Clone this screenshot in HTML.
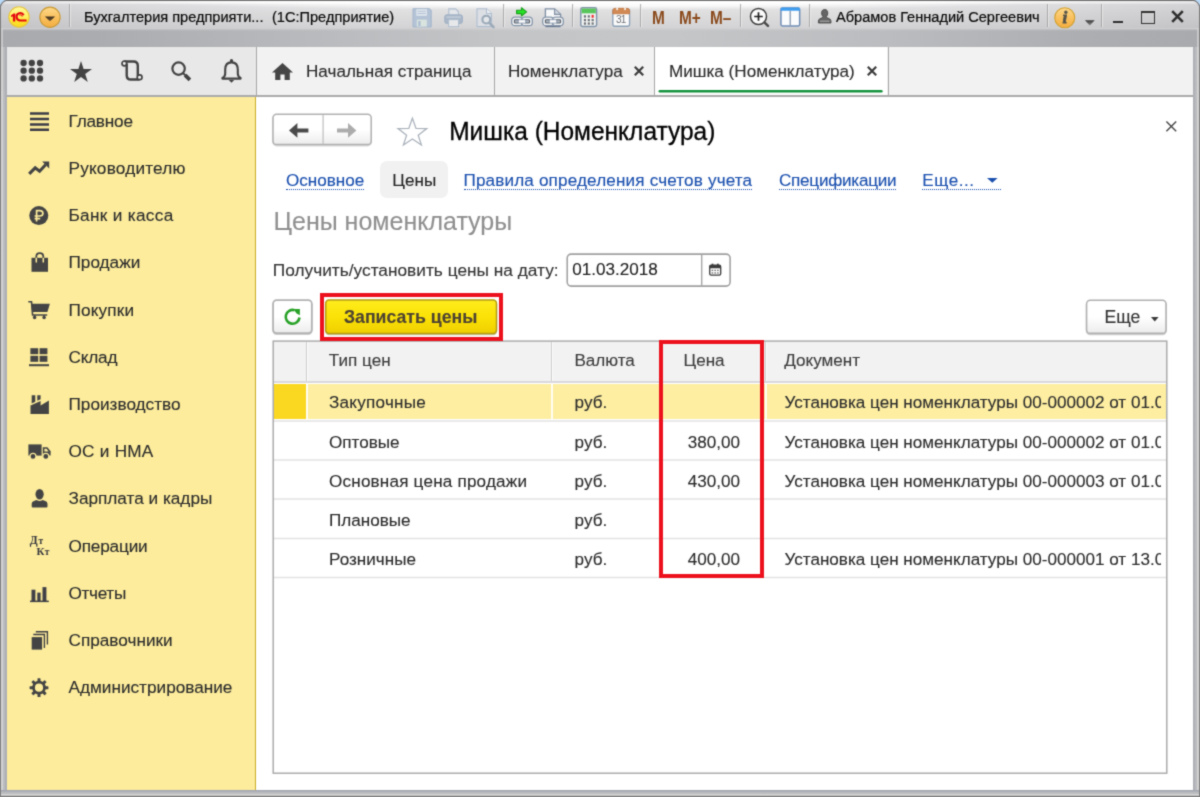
<!DOCTYPE html>
<html lang="ru">
<head>
<meta charset="utf-8">
<title>1C</title>
<style>
*{box-sizing:border-box;margin:0;padding:0}
html,body{width:1200px;height:797px;overflow:hidden;background:#b4b5b9;font-family:"Liberation Sans",sans-serif;}
body{position:relative;}
#wrap{position:absolute;left:0;top:0;width:1200px;height:797px;overflow:hidden;filter:url(#pgblur)}
.abs{position:absolute}
.t{position:absolute;white-space:nowrap;line-height:20px;font-size:17.1px;color:#2b2b2b;-webkit-text-stroke-width:.12px}
svg{position:absolute;overflow:visible}
/* ---------- window frame ---------- */
#frame{left:0;top:0;width:1200px;height:797px;background:#b6b7bb;}
#titlebar{left:1px;top:1px;width:1198px;height:46px;background:linear-gradient(to bottom,#fcfcfc 0px,#fafafa 2px,#e5e5e7 3.4px,#dededf 12px,#d3d3d5 27px,#cfcfd1 28px);}
#tshade{left:1px;top:1px;width:1198px;height:28px;background:linear-gradient(to right,rgba(90,90,100,.13) 0,rgba(90,90,100,.06) 12%,rgba(90,90,100,0) 30%,rgba(90,90,100,0) 70%,rgba(90,90,100,.06) 88%,rgba(90,90,100,.13) 100%)}
#tglow{left:120px;top:1px;width:960px;height:8.5px;background:radial-gradient(ellipse 50% 100% at 50% 0,rgba(255,255,255,.95) 0,rgba(255,255,255,.8) 55%,rgba(255,255,255,0) 100%)}
#band{left:1px;top:28.6px;width:1198px;height:18.4px;background:linear-gradient(to right,#a9aaae 0,#abacb0 8%,#b9babd 26%,#c4c5c7 42%,#c5c6c8 56%,#bbbcbf 74%,#adaeb2 90%,#a9aaae 100%)}
#bandtop{left:1px;top:27.6px;width:1198px;height:3px;background:linear-gradient(to bottom,rgba(207,207,209,1) 0,rgba(207,207,209,.55) 45%,rgba(207,207,209,0) 100%)}
.tsep{position:absolute;top:4px;width:2px;height:22.5px;background:linear-gradient(to right,#939393 0,#939393 1px,#f2f2f2 1px);opacity:.68}
.tt{position:absolute;white-space:nowrap;font-size:15.5px;line-height:18px;color:#0a0a0a;-webkit-text-stroke-width:.22px;transform-origin:0 0;transform:scaleX(.94)}
/* ---------- toolbar / tabs ---------- */
#toolbar{left:7px;top:47px;width:249px;height:48px;background:#e8e8e8}
#tabs{left:257px;top:47px;width:936px;height:48px;background:#f2f2f2}
#tabline{left:7px;top:95px;width:1186px;height:1.5px;background:#aaaaaa}
.vsep{position:absolute;top:47px;width:1.4px;height:48px;background:#a6a6a6}
/* ---------- sidebar ---------- */
#sidebar{left:7px;top:96.5px;width:248px;height:693.5px;background:#fcec9c}
#sideedge{left:254.8px;top:96.5px;width:1.5px;height:693.5px;background:linear-gradient(to right,#d9bd3a,#bf9d12)}
#main{left:256.3px;top:96.5px;width:936.7px;height:693.5px;background:#fff}
.st{left:68.5px;font-size:17.2px;color:#2b2b2b}
.lnk{color:#1a4fae;border-bottom:1.4px dotted #1a4fae;height:19.4px}
.th{color:#3b3b3b}
.num{left:663px;width:77px;text-align:right}
.doc{width:376.6px;overflow:hidden}
</style>
</head>
<body>
<svg width="0" height="0" style="position:absolute"><filter id="pgblur" x="0" y="0" width="100%" height="100%" color-interpolation-filters="sRGB"><feConvolveMatrix order="3" kernelMatrix="0.03 0.1 0.03 0.1 0.48 0.1 0.03 0.1 0.03" divisor="1" edgeMode="duplicate" preserveAlpha="true"/></filter></svg>
<div id="wrap">
<div id="frame" class="abs"></div>
<div id="titlebar" class="abs"></div>
<div id="tshade" class="abs"></div>
<div id="tglow" class="abs"></div>
<div id="band" class="abs"></div>
<div id="bandtop" class="abs"></div>
<div id="toolbar" class="abs"></div>
<div id="tabs" class="abs"></div>
<div id="sidebar" class="abs"></div>
<div id="sideedge" class="abs"></div>
<div id="main" class="abs"></div>
<div id="tabline" class="abs"></div>
<!--TITLEBAR-->
<!-- 1C logo -->
<svg style="left:8px;top:6px" width="22" height="22" viewBox="0 0 22 22">
 <defs>
  <linearGradient id="g1c" x1="0" y1="0" x2="0" y2="1"><stop offset="0" stop-color="#fff9a0"/><stop offset=".45" stop-color="#fff163"/><stop offset=".7" stop-color="#fee530"/><stop offset="1" stop-color="#f8d61e"/></linearGradient>
  <linearGradient id="gor" x1="0" y1="0" x2="0" y2="1"><stop offset="0" stop-color="#fdd98a"/><stop offset=".5" stop-color="#f9c160"/><stop offset="1" stop-color="#f4ae40"/></linearGradient>
  <linearGradient id="gtri" x1="0" y1="0" x2="0" y2="1"><stop offset="0" stop-color="#3a2c1c"/><stop offset="1" stop-color="#6b5330"/></linearGradient>
 </defs>
 <circle cx="11" cy="11" r="10.2" fill="url(#g1c)" stroke="#e6c33c" stroke-width="1.1"/>
 <path d="M2.9 9.6 L5.6 7.4 L7.3 7.4 L7.3 15.6 L4.9 15.6 L4.9 10.3 L3.4 11.2 Z" fill="#e4080f"/>
 <path d="M15.6 9.3 A3.7 3.7 0 1 0 12.1 14.5 L18.6 14.5" fill="none" stroke="#e4080f" stroke-width="2.1"/>
 <path d="M14.2 10.6 A1.9 1.9 0 0 0 11.4 9.2" fill="none" stroke="#e4080f" stroke-width="1"/>
</svg>
<!-- orange dropdown -->
<svg style="left:39px;top:6px" width="22" height="22" viewBox="0 0 22 22">
 <circle cx="11" cy="11.2" r="10.1" fill="url(#gor)" stroke="#c99a36" stroke-width="1.2"/>
 <path d="M5.9 10.4 L16.1 10.4 L11 15.2 Z" fill="url(#gtri)"/>
</svg>
<div class="tsep" style="left:68.5px"></div>
<div class="tt" style="left:84px;top:7.5px">Бухгалтерия предприяти...</div>
<div class="tt" style="left:271.5px;top:7.5px">(1С:Предприятие)</div>
<!-- save (disabled) -->
<svg style="left:412px;top:8px" width="20" height="20" viewBox="0 0 20 20">
 <path d="M1 .7 H17.6 L19.2 2.3 V19 H1 Z" fill="#b4c3d6" stroke="#a3b5cb" stroke-width="1"/>
 <rect x="4.3" y="1.2" width="10.6" height="6.6" fill="#dfe6ee"/>
 <path d="M5.5 3.3 H13.8 M5.5 5.5 H13.8" stroke="#b4c3d6" stroke-width="1"/>
 <rect x="4.8" y="11.6" width="10" height="7" fill="#d9e4df"/>
 <rect x="6.3" y="13" width="2.2" height="5" fill="#a9bbd0"/>
</svg>
<!-- printer (disabled) -->
<svg style="left:443.5px;top:7.8px" width="19.2" height="19.4" viewBox="0 0 20 20">
 <path d="M5 7 V.8 H12 L15 3.6 V7" fill="#e3e6ea" stroke="#aebccd" stroke-width="1.1"/>
 <rect x=".8" y="7" width="18.4" height="9" rx="2" fill="#a9b7c8" stroke="#9fb0c4" stroke-width="1"/>
 <path d="M2.5 9.3 H17.5" stroke="#cdd6e0" stroke-width="1.2"/>
 <rect x="4.8" y="12" width="10.4" height="7.4" fill="#e6e8ea" stroke="#aebccd" stroke-width="1"/>
</svg>
<!-- preview (disabled) -->
<svg style="left:475.5px;top:8px" width="20" height="20" viewBox="0 0 20 20">
 <path d="M1 .7 H10.5 L15.5 5.5 V18.6 H1 Z" fill="#dcdfe4" stroke="#aebdd0" stroke-width="1.1"/>
 <path d="M10.5 .7 V5.5 H15.5" fill="#eef0f3" stroke="#aebdd0" stroke-width="1"/>
 <circle cx="10.3" cy="11.6" r="3.9" fill="#e4e7ea" stroke="#9aa9b8" stroke-width="2.1"/>
 <path d="M13.3 14.8 L17.6 19.2" stroke="#9aa9b8" stroke-width="2.4" stroke-linecap="round"/>
</svg>
<div class="tsep" style="left:503px"></div>
<!-- link with green arrow -->
<svg style="left:511px;top:6.5px" width="23" height="20" viewBox="0 0 23 20">
 <path d="M5.6 3.2 H10.4 V.8 L15.6 4.9 L10.4 9 V6.6 H5.6 Z" fill="#25e426" stroke="#1a9e1a" stroke-width="1.1" stroke-linejoin="round"/>
 <g transform="translate(0 9.4)"><g stroke="#8494a8" stroke-width="1.3" fill="#f5f7f9"><rect x=".7" y=".7" width="10.8" height="8.6" rx="3.2"/><rect x="10.5" y=".7" width="10.8" height="8.6" rx="3.2"/></g>
 <rect x="3.4" y="3.4" width="4.6" height="3.2" rx=".8" fill="#aeb6c0" stroke="#59616b" stroke-width="1.1"/><rect x="14" y="3.4" width="4.6" height="3.2" rx=".8" fill="#aeb6c0" stroke="#59616b" stroke-width="1.1"/>
 <rect x="7.2" y="3.3" width="7.6" height="3.4" rx="1.2" fill="#fdfdfe" stroke="#8494a8" stroke-width=".9"/></g>
</svg>
<!-- document link -->
<svg style="left:542.2px;top:7.5px" width="23" height="20" viewBox="0 0 23 20">
 <path d="M3.4 9.6 V.9 H12.6 L18.6 6.4 V9.6" fill="#f7f8f9" stroke="#7f8ea3" stroke-width="1.3"/>
 <path d="M12.6 .9 V6.4 H18.6" fill="#cfd6df" stroke="#7f8ea3" stroke-width="1.1"/>
 <path d="M3.4 18.4 H18.6" stroke="#66768e" stroke-width="1.6"/>
 <g transform="translate(0 8.4)"><g stroke="#8494a8" stroke-width="1.3" fill="#f5f7f9"><rect x=".7" y=".7" width="10.8" height="8.6" rx="3.2"/><rect x="10.5" y=".7" width="10.8" height="8.6" rx="3.2"/></g>
 <rect x="3.4" y="3.4" width="4.6" height="3.2" rx=".8" fill="#aeb6c0" stroke="#59616b" stroke-width="1.1"/><rect x="14" y="3.4" width="4.6" height="3.2" rx=".8" fill="#aeb6c0" stroke="#59616b" stroke-width="1.1"/>
 <rect x="7.2" y="3.3" width="7.6" height="3.4" rx="1.2" fill="#fdfdfe" stroke="#8494a8" stroke-width=".9"/></g>
</svg>
<div class="tsep" style="left:571.5px"></div>
<!-- calculator -->
<svg style="left:579.8px;top:6.8px" width="17.4" height="20.2" viewBox="0 0 18 21">
 <rect x=".8" y=".8" width="16.4" height="19.4" rx="1.8" fill="#f3f4f2" stroke="#7f93a8" stroke-width="1.5"/>
 <rect x="1.6" y="1.6" width="14.8" height="5" fill="#58c65a"/>
 <g fill="#6b6f75"><rect x="4" y="8.6" width="2.2" height="2.4"/><rect x="8" y="8.6" width="2.2" height="2.4"/><rect x="4" y="12.4" width="2.2" height="2.4"/><rect x="8" y="12.4" width="2.2" height="2.4"/><rect x="12" y="12.4" width="2.2" height="2.4"/><rect x="4" y="16" width="2.2" height="2.4"/><rect x="8" y="16" width="2.2" height="2.4"/><rect x="12" y="16" width="2.2" height="2.4"/></g>
 <rect x="12" y="8.2" width="2.2" height="3" fill="#f0262c"/>
</svg>
<!-- calendar 31 -->
<svg style="left:611.8px;top:6.6px" width="18.4" height="20.2" viewBox="0 0 19 21">
 <rect x=".8" y="2" width="17.4" height="18" rx="2" fill="#fbfbfb" stroke="#8ca0b6" stroke-width="1.4"/>
 <path d="M.8 7 V4 Q.8 1.4 3.4 1.4 H15.6 Q18.2 1.4 18.2 4 V7 Z" fill="#d28a55" stroke="#c67c48" stroke-width="1"/>
 <rect x="4.4" y=".2" width="1.8" height="3" fill="#f5f0ea"/><rect x="12.6" y=".2" width="1.8" height="3" fill="#f5f0ea"/>
 <text x="9.5" y="17" font-family="Liberation Sans" font-size="10.5" fill="#6d7076" text-anchor="middle" textLength="11">31</text>
</svg>
<div class="tsep" style="left:640px"></div>
<div class="abs" style="left:651.5px;top:6.5px;font-size:17.5px;line-height:22px;font-weight:700;color:#8a4a1c;white-space:nowrap;transform-origin:0 0;transform:scaleX(.88)">M</div>
<div class="abs" style="left:678.5px;top:6.5px;font-size:17.5px;line-height:22px;font-weight:700;color:#8a4a1c;white-space:nowrap;transform-origin:0 0;transform:scaleX(.88)">M+</div>
<div class="abs" style="left:709.5px;top:6.5px;font-size:17.5px;line-height:22px;font-weight:700;color:#8a4a1c;white-space:nowrap;transform-origin:0 0;transform:scaleX(.88)">M–</div>
<div class="tsep" style="left:740px"></div>
<!-- zoom -->
<svg style="left:748.5px;top:7px" width="22" height="22" viewBox="0 0 22 22">
 <circle cx="9.5" cy="9.5" r="8" fill="#fcfcfc" stroke="#3c3c3c" stroke-width="1.5"/>
 <path d="M5.2 9.5 H13.8 M9.5 5.2 V13.8" stroke="#1e1e1e" stroke-width="1.7"/>
 <path d="M15.4 15.4 L19 18.8" stroke="#4a4a4a" stroke-width="2.5" stroke-linecap="round"/>
</svg>
<!-- panels -->
<svg style="left:780.4px;top:6.6px" width="20.6" height="20" viewBox="0 0 22 21">
 <rect x="1" y="1" width="20" height="19" rx="1.5" fill="#fafbfd" stroke="#6f8db4" stroke-width="1.6"/>
 <path d="M.6 3.8 V2 Q.6 .4 2.2 .4 H19.8 Q21.4 .4 21.4 2 V3.8 Z" fill="#3f9df0"/>
 <path d="M10.9 3.8 V19.4" stroke="#7d8ea6" stroke-width="1.3"/>
</svg>
<div class="tsep" style="left:808.5px"></div>
<!-- user -->
<svg style="left:817.8px;top:8.6px" width="13.4" height="14.6" viewBox="0 0 14 15">
 <path d="M7 .4 C9.3 .4 10.2 2 10.2 4 C10.2 5.8 9.6 7 8.8 7.7 C8.8 9 10.5 9.4 11.9 10 C13.3 10.6 13.6 11.6 13.6 14.5 H.4 C.4 11.6 .7 10.6 2.1 10 C3.5 9.4 5.2 9 5.2 7.7 C4.4 7 3.8 5.8 3.8 4 C3.8 2 4.7 .4 7 .4 Z" fill="#666" stroke="#444" stroke-width=".9"/>
 <path d="M2 12.6 H12" stroke="#b0b0b0" stroke-width="1.1"/>
</svg>
<div class="tt" style="left:836px;top:7.5px">Абрамов Геннадий Сергеевич</div>
<div class="tsep" style="left:1046.5px"></div>
<!-- info -->
<svg style="left:1054.3px;top:6.7px" width="21.5" height="21.5" viewBox="0 0 22 22">
 <circle cx="11" cy="11" r="10.2" fill="url(#gor)" stroke="#d3a030" stroke-width="1.2"/>
 <text x="11.2" y="16.8" font-family="Liberation Serif" font-style="italic" font-weight="700" font-size="17.5" fill="#55544a" stroke="#55544a" stroke-width=".8" text-anchor="middle">i</text>
</svg>
<svg style="left:1083.6px;top:19.6px" width="11.6" height="6" viewBox="0 0 12 7"><path d="M.3 .4 H11.7 L6 6.4 Z" fill="url(#gdd)"/><defs><linearGradient id="gdd" x1="0" y1="0" x2="0" y2="1"><stop offset="0" stop-color="#383838"/><stop offset="1" stop-color="#8a8a8a"/></linearGradient></defs></svg>
<div class="tsep" style="left:1100.5px"></div>
<!-- window buttons -->
<div class="abs" style="left:1113.2px;top:20.6px;width:10.2px;height:2.3px;background:#2e2e2e"></div>
<div class="abs" style="left:1140.5px;top:11px;width:14.5px;height:13px;border:1.4px solid #333;border-top-width:2.4px"></div>
<svg style="left:1171.2px;top:10.2px" width="13" height="13" viewBox="0 0 13 13"><path d="M1.2 1.2 L11.8 11.8 M11.8 1.2 L1.2 11.8" stroke="#2e2e2e" stroke-width="2.6"/></svg>
<!--/TITLEBAR-->
<!--TOOLBAR-->
<div class="vsep" style="left:255.8px"></div>
<div class="vsep" style="left:493.5px"></div>
<div class="vsep" style="left:654px"></div>
<div class="vsep" style="left:887.5px"></div>
<div class="abs" style="left:655.4px;top:47px;width:232.1px;height:48px;background:#fff"></div>
<svg style="left:0;top:0" width="1200" height="100" viewBox="0 0 1200 100"><path d="M659.8 91.2 H881.4" stroke="#12913a" stroke-width="2.5" stroke-linecap="round"/></svg>
<!-- grid -->
<svg style="left:20px;top:59px" width="24" height="24" viewBox="0 0 24 24"><g fill="#424242">
<circle cx="3.6" cy="4" r="3.15"/><circle cx="11.8" cy="4" r="3.15"/><circle cx="20" cy="4" r="3.15"/>
<circle cx="3.6" cy="11.7" r="3.15"/><circle cx="11.8" cy="11.7" r="3.15"/><circle cx="20" cy="11.7" r="3.15"/>
<circle cx="3.6" cy="19.4" r="3.15"/><circle cx="11.8" cy="19.4" r="3.15"/><circle cx="20" cy="19.4" r="3.15"/></g></svg>
<!-- star -->
<svg style="left:70px;top:61px" width="22" height="21" viewBox="0 0 22 21"><path d="M11 0 L13.6 8 L22 8 L15.2 12.9 L17.8 21 L11 16 L4.2 21 L6.8 12.9 L0 8 L8.4 8 Z" fill="#424242"/></svg>
<!-- scroll / history -->
<svg style="left:121px;top:60.3px" width="22" height="21" viewBox="0 0 22 21">
 <path d="M3.4 4.8 H5.7 V15.2 Q5.7 19.5 10 19.5 H18.4" fill="none" stroke="#424242" stroke-width="2.4"/>
 <path d="M3.4 1.5 H12.5 Q16.8 1.5 16.8 5.8 V15.4" fill="none" stroke="#424242" stroke-width="2.4"/>
 <circle cx="3.3" cy="3.5" r="2.3" fill="#f6f6f6" stroke="#424242" stroke-width="1.7"/>
 <circle cx="18.6" cy="17.2" r="2.4" fill="#f6f6f6" stroke="#424242" stroke-width="1.7"/>
</svg>
<!-- search -->
<svg style="left:170.5px;top:60.5px" width="21" height="21" viewBox="0 0 21 21">
 <circle cx="7.6" cy="7.6" r="6.2" fill="none" stroke="#424242" stroke-width="2.2"/>
 <path d="M12.2 12.2 L14.4 14.4" stroke="#424242" stroke-width="2"/>
 <path d="M15.4 12.8 L20.2 17.6 L17.6 20.2 L12.8 15.4 Z" fill="#424242"/>
</svg>
<!-- bell -->
<svg style="left:220.5px;top:58.5px" width="21" height="24" viewBox="0 0 21 24">
 <path d="M10.5 3.4 C5.6 3.4 4.2 7 4.2 10.6 V14.6 Q4.2 17.6 1.4 18.9 V19.6 H19.6 V18.9 Q16.8 17.6 16.8 14.6 V10.6 C16.8 7 15.4 3.4 10.5 3.4 Z" fill="none" stroke="#424242" stroke-width="2.1" stroke-linejoin="round"/>
 <ellipse cx="10.5" cy="2" rx="1.7" ry="1.9" fill="#424242"/>
 <path d="M7.8 21 H13.2 L10.5 23.7 Z" fill="#424242"/>
</svg>
<!-- home -->
<svg style="left:271.5px;top:63px" width="21" height="17" viewBox="0 0 21 17"><path d="M10.5 0 L21 9.6 H17.8 V17 H12.6 V11.4 H8.4 V17 H3.2 V9.6 H0 Z" fill="#454545"/></svg>
<div class="t" style="left:306px;top:61.5px">Начальная страница</div>
<div class="t" style="left:508px;top:61.5px">Номенклатура</div>
<svg style="left:633.6px;top:66px" width="10" height="10" viewBox="0 0 10 10"><path d="M.8 .8 L9.2 9.2 M9.2 .8 L.8 9.2" stroke="#3a3a3a" stroke-width="2.2"/></svg>
<div class="t" style="left:669px;top:61.5px">Мишка (Номенклатура)</div>
<svg style="left:867px;top:66px" width="10" height="10" viewBox="0 0 10 10"><path d="M.8 .8 L9.2 9.2 M9.2 .8 L.8 9.2" stroke="#3a3a3a" stroke-width="2.2"/></svg>
<!--/TOOLBAR-->
<!--SIDEBAR-->
<!-- 1 Главное: hamburger -->
<svg style="left:29.5px;top:112px" width="19" height="19" viewBox="0 0 19 19"><path d="M0 1.4 H19 M0 6.9 H19 M0 12.4 H19 M0 17.8 H19" stroke="#3a3a46" stroke-width="2.5"/></svg>
<div class="t st" style="top:110.8px;letter-spacing:-0.19px">Главное</div>
<!-- 2 Руководителю: trend -->
<svg style="left:28.2px;top:161.2px" width="22" height="15" viewBox="0 0 22 15"><path d="M1.2 12.8 L7.2 6.8 L11.6 10.2 L17.6 3.8" fill="none" stroke="#444" stroke-width="3.1" stroke-linejoin="miter"/><path d="M14.2 .6 H21.2 V7.6 Z" fill="#444"/></svg>
<div class="t st" style="top:158.0px;letter-spacing:0.20px">Руководителю</div>
<!-- 3 Банк и касса: ruble coin -->
<svg style="left:29.2px;top:206px" width="20" height="20" viewBox="0 0 20 20"><circle cx="9.8" cy="9.6" r="9.5" fill="#444"/><path d="M7.6 15.4 V4.6 H10.8 Q13.9 4.6 13.9 7.3 Q13.9 10 10.8 10 H5.6 M5.6 12.6 H11.2" fill="none" stroke="#fcec9c" stroke-width="1.7"/></svg>
<div class="t st" style="top:205.2px;letter-spacing:0.32px">Банк и касса</div>
<!-- 4 Продажи: bag -->
<svg style="left:30.5px;top:252px" width="18" height="20" viewBox="0 0 18 20"><path d="M.5 5.8 H17 V19.8 H.5 Z" fill="#444"/><path d="M5.3 6 V4.6 Q5.3 1.2 8.8 1.2 Q12.3 1.2 12.3 4.6 V6" fill="none" stroke="#444" stroke-width="1.8"/><path d="M5.3 5.8 V10.6 M12.3 5.8 V10.6" stroke="#fcec9c" stroke-width="1.5"/></svg>
<div class="t st" style="top:252.4px">Продажи</div>
<!-- 5 Покупки: cart -->
<svg style="left:28px;top:300px" width="23" height="20" viewBox="0 0 23 20"><path d="M.3 1.7 H3.5 L4.6 15 H19.2" fill="none" stroke="#444" stroke-width="1.6"/><path d="M3.4 3.7 H21.9 L19.4 12.1 H4.1 Z" fill="#444"/><path d="M6.6 15 V17 M16.1 15 V17" stroke="#444" stroke-width="1.4"/><circle cx="6.6" cy="17.5" r="1.75" fill="#444"/><circle cx="16.1" cy="17.5" r="1.75" fill="#444"/></svg>
<div class="t st" style="top:299.6px;letter-spacing:0.14px">Покупки</div>
<!-- 6 Склад -->
<svg style="left:28.5px;top:348px" width="20" height="19" viewBox="0 0 20 19"><g fill="#444"><rect x="1.4" y=".2" width="7.8" height="6"/><rect x="10.6" y=".2" width="7.8" height="6"/><rect x="1.4" y="7.8" width="7.8" height="6"/><rect x="10.6" y="7.8" width="7.8" height="6"/><rect x="0" y="16.2" width="20" height="2"/></g></svg>
<div class="t st" style="top:346.8px;letter-spacing:-0.18px">Склад</div>
<!-- 7 Производство: factory -->
<svg style="left:29.5px;top:395px" width="19" height="19" viewBox="0 0 19 19"><g fill="#444"><path d="M.5 19 V10.6 L10.6 6 V10.6 L18.9 5.6 V19 Z"/><path d="M1.7 .3 H5.3 V6.7 L1.7 8.4 Z"/><path d="M7.3 .3 H10.6 V4.3 L7.3 5.8 Z"/></g></svg>
<div class="t st" style="top:394.0px">Производство</div>
<!-- 8 ОС и НМА: truck -->
<svg style="left:28px;top:444px" width="23" height="16" viewBox="0 0 23 16"><path d="M.4 .4 H13.6 V11.6 H.4 Z" fill="#444"/><path d="M14.8 3.2 H19.4 L22.6 7.2 V11.6 H14.8 Z" fill="#444"/><path d="M16.4 4.8 H18.6 L20.6 7.4 H16.4 Z" fill="#fcec9c"/><circle cx="5" cy="12.4" r="3" fill="#444" stroke="#fcec9c" stroke-width="1.2"/><circle cx="17.8" cy="12.4" r="3" fill="#444" stroke="#fcec9c" stroke-width="1.2"/></svg>
<div class="t st" style="top:441.2px;letter-spacing:0.24px">ОС и НМА</div>
<!-- 9 Зарплата и кадры: person -->
<svg style="left:30.5px;top:489.4px" width="18" height="19" viewBox="0 0 18 19"><g fill="#444"><ellipse cx="8.6" cy="5.3" rx="4.1" ry="5.3"/><path d="M.7 17.4 V14.8 Q.7 12.6 3 11.9 L5.6 11 Q8.6 13.2 11.6 11 L14.2 11.9 Q16.5 12.6 16.5 14.8 V17.4 Q16.5 18.5 15.4 18.5 H1.8 Q.7 18.5 .7 17.4 Z"/></g></svg>
<div class="t st" style="top:488.4px">Зарплата и кадры</div>
<!-- 10 Операции: Дт Кт -->
<div class="abs" style="left:29.8px;top:535.2px;font-family:'Liberation Serif',serif;font-weight:700;font-size:11.5px;line-height:11px;color:#34343c;white-space:nowrap;letter-spacing:.7px">Д<span style="font-size:9.5px">т</span></div>
<div class="abs" style="left:36.4px;top:546.4px;font-family:'Liberation Serif',serif;font-weight:700;font-size:11px;line-height:11px;color:#34343c;white-space:nowrap;letter-spacing:.3px">К<span style="font-size:9.5px">т</span></div>
<div class="t st" style="top:535.6px;letter-spacing:-0.17px">Операции</div>
<!-- 11 Отчеты: bars -->
<svg style="left:29.5px;top:586.5px" width="19" height="16" viewBox="0 0 19 16"><g fill="#404046"><rect x="1.5" y="2.7" width="3.9" height="11.4"/><rect x="7.3" y="5.6" width="3.3" height="8.5"/><rect x="12.5" y=".1" width="3.9" height="14"/><rect x="0" y="13.6" width="18.8" height="1.5"/></g></svg>
<div class="t st" style="top:582.8px;letter-spacing:-0.33px">Отчеты</div>
<!-- 12 Справочники: stacked docs -->
<svg style="left:30.5px;top:630px" width="18" height="20" viewBox="0 0 18 20"><path d="M4.8 1.7 H16.4 V14.4" fill="none" stroke="#3e3e44" stroke-width="1.35"/><path d="M2.3 4.5 H13.4 V18.1" fill="none" stroke="#3e3e44" stroke-width="1.35"/><rect x=".7" y="7.1" width="10.4" height="12.5" fill="#444"/></svg>
<div class="t st" style="top:630.0px">Справочники</div>
<!-- 13 Администрирование: gear -->
<svg style="left:29px;top:678px" width="20" height="20" viewBox="0 0 20 20"><g transform="translate(10 9.7)"><g fill="#444"><rect x="-1.5" y="-9.4" width="3" height="18.8" rx=".6"/><rect x="-1.5" y="-9.4" width="3" height="18.8" rx=".6" transform="rotate(45)"/><rect x="-1.5" y="-9.4" width="3" height="18.8" rx=".6" transform="rotate(90)"/><rect x="-1.5" y="-9.4" width="3" height="18.8" rx=".6" transform="rotate(135)"/><circle r="6.9"/></g><circle r="4.1" fill="#fcec9c"/></g></svg>
<div class="t st" style="top:677.2px">Администрирование</div>
<!--/SIDEBAR-->
<!--MAIN-->
<!-- boxes -->
<svg style="left:0;top:0" width="1200" height="797" viewBox="0 0 1200 797">
 <defs>
  <linearGradient id="gbtn" x1="0" y1="0" x2="0" y2="1"><stop offset="0" stop-color="#fff"/><stop offset=".5" stop-color="#fff"/><stop offset="1" stop-color="#ececec"/></linearGradient>
  <linearGradient id="gyel" x1="0" y1="0" x2="0" y2="1"><stop offset="0" stop-color="#feec1c"/><stop offset=".5" stop-color="#fbe207"/><stop offset="1" stop-color="#efcf00"/></linearGradient>
 </defs>
 <!-- back/forward -->
 <rect x="273" y="115" width="98.2" height="30.6" rx="3.6" fill="none" stroke="#8e8e8e" stroke-opacity=".35" stroke-width="1.6"/>
 <rect x="273" y="114.2" width="98.2" height="30.4" rx="3.6" fill="url(#gbtn)" stroke="#b0b0b0" stroke-width="1.5"/>
 <path d="M323.1 115 V144" stroke="#c2c2c2" stroke-width="1.3"/>
 <!-- date field -->
 <rect x="567.2" y="254.1" width="162.9" height="32" rx="4" fill="#fff" stroke="#a0a0a0" stroke-width="1.55"/>
 <path d="M701.7 254.8 V285.4" stroke="#a2a2a2" stroke-width="1.35"/>
 <!-- refresh button -->
 <rect x="273.1" y="301.2" width="38.7" height="33" rx="3.6" fill="none" stroke="#8e8e8e" stroke-opacity=".45" stroke-width="1.7"/>
 <rect x="273.1" y="300.1" width="38.7" height="33" rx="3.6" fill="url(#gbtn)" stroke="#b2b2b2" stroke-width="1.7"/>
 <!-- yellow button -->
 <rect x="325.7" y="301" width="170.8" height="33.4" rx="3.4" fill="none" stroke="#7d6a00" stroke-opacity=".4" stroke-width="1.5"/>
 <rect x="325.7" y="300.1" width="170.8" height="33.4" rx="3.4" fill="url(#gyel)" stroke="#b49a10" stroke-width="1.5"/>
 <!-- Еще button -->
 <rect x="1086.6" y="301.4" width="79.4" height="33" rx="3.6" fill="none" stroke="#8e8e8e" stroke-opacity=".45" stroke-width="1.7"/>
 <rect x="1086.6" y="300.3" width="79.4" height="33" rx="3.6" fill="url(#gbtn)" stroke="#b0b0b0" stroke-width="1.5"/>
 <!-- table frame -->
 <rect x="273.2" y="341.1" width="893.6" height="432.1" fill="#fff" stroke="#a6a6a6" stroke-width="1.4"/>
</svg>
<!-- back / forward -->
<svg style="left:288.5px;top:122.5px" width="20" height="15" viewBox="0 0 20 15"><path d="M0 7.4 L8.4 0 V5.4 H19.4 V9.4 H8.4 V14.8 Z" fill="#4a4a4a"/></svg>
<svg style="left:336.8px;top:122.5px" width="20" height="15" viewBox="0 0 20 15"><path d="M19.4 7.4 L11 0 V5.4 H0 V9.4 H11 V14.8 Z" fill="#acacac"/></svg>
<!-- star outline -->
<svg style="left:396.5px;top:116.5px" width="31" height="29" viewBox="0 0 31 29"><path d="M15.4 1.2 L19 11.4 L29.8 11.6 L21.2 18.2 L24.4 28 L15.4 22 L6.4 28 L9.6 18.2 L1 11.6 L11.8 11.4 Z" fill="#fff" stroke="#aab2bb" stroke-width="1.25" stroke-linejoin="miter"/></svg>
<div class="t" style="left:449.2px;top:116.6px;font-size:24.5px;line-height:30px;color:#000;-webkit-text-stroke-width:.3px;transform-origin:0 23.4px;transform:scaleY(1.07)">Мишка (Номенклатура)</div>
<svg style="left:1165.8px;top:121px" width="11" height="11" viewBox="0 0 11 11"><path d="M.4 .4 L10.2 10.2 M10.2 .4 L.4 10.2" stroke="#444" stroke-width="1.35"/></svg>
<!-- nav links -->
<div class="t lnk" style="left:286px;top:170.6px">Основное</div>
<div class="abs" style="left:379.5px;top:160.5px;width:68.5px;height:37px;border-radius:7px;background:#f1f1f1"></div>
<div class="t" style="left:392.3px;top:170.6px;color:#222">Цены</div>
<div class="t lnk" style="left:463.5px;top:170.6px;letter-spacing:.16px">Правила определения счетов учета</div>
<div class="t lnk" style="left:779px;top:170.6px;letter-spacing:-.25px">Спецификации</div>
<div class="t lnk" style="left:922.3px;top:170.6px;width:79px;letter-spacing:.55px">Еще...</div>
<svg style="left:987px;top:177.5px" width="11" height="5" viewBox="0 0 11 5"><path d="M0 0 H10.6 L5.3 4.8 Z" fill="#1a4fae"/></svg>
<div class="t" style="left:273.5px;top:206.2px;font-size:25px;line-height:30px;color:#8f8f8f">Цены номенклатуры</div>
<div class="t" style="left:272.8px;top:260px;font-size:17.3px;color:#333">Получить/установить цены на дату:</div>
<!-- date field -->
<div class="t" style="left:572.3px;top:259.5px;color:#222">01.03.2018</div>
<svg style="left:709.2px;top:263px" width="12.4" height="13.4" viewBox="0 0 14 14"><rect x=".8" y="2" width="12.4" height="11.2" rx="1.6" fill="#fff" stroke="#3c3c3c" stroke-width="1.5"/><rect x=".8" y="2" width="12.4" height="3.4" fill="#3c3c3c"/><rect x="3" y=".2" width="1.9" height="3" fill="#3c3c3c"/><rect x="9.1" y=".2" width="1.9" height="3" fill="#3c3c3c"/><g fill="#6a6a6a"><rect x="3" y="7" width="1.7" height="1.5"/><rect x="6.1" y="7" width="1.7" height="1.5"/><rect x="9.2" y="7" width="1.7" height="1.5"/><rect x="3" y="9.9" width="1.7" height="1.5"/><rect x="6.1" y="9.9" width="1.7" height="1.5"/><rect x="9.2" y="9.9" width="1.7" height="1.5"/></g></svg>
<!-- refresh button -->
<svg style="left:0;top:0" width="1200" height="797" viewBox="0 0 1200 797"><path d="M299.5 317.5 A6.9 6.9 0 1 1 294.6 310.2" fill="none" stroke="#27a127" stroke-width="2.6"/><path d="M293.4 308.9 H299.9 V315.2 L296.6 313.4 Z" fill="#27a127"/></svg>
<!-- yellow button -->
<div class="t" style="left:344px;top:307px;font-size:17.7px;font-weight:700;color:#4d4232">Записать цены</div>
<!-- Еще button -->
<div class="t" style="left:1104.6px;top:307px;font-size:17.6px;color:#333">Еще</div>
<svg style="left:1151.2px;top:316.6px" width="8" height="5" viewBox="0 0 8 5"><path d="M0 0 H7.6 L3.8 4.6 Z" fill="#3a3a3a"/></svg>
<!-- table -->
<div class="abs" style="left:274px;top:341.8px;width:891.8px;height:39.4px;background:#f2f2f2"></div>
<div class="abs" style="left:274px;top:381.2px;width:891.8px;height:1.8px;background:#d9d9dd"></div>
<div class="abs" style="left:305.6px;top:341.8px;width:2px;height:39.4px;background:linear-gradient(to right,#cdcdcd 0,#cdcdcd 50%,#fdfdfd 50%)"></div>
<div class="abs" style="left:551px;top:341.8px;width:2px;height:39.4px;background:linear-gradient(to right,#cdcdcd 0,#cdcdcd 50%,#fdfdfd 50%)"></div>
<div class="abs" style="left:660.6px;top:341.8px;width:2px;height:39.4px;background:linear-gradient(to right,#cdcdcd 0,#cdcdcd 50%,#fdfdfd 50%)"></div>
<div class="abs" style="left:765.4px;top:341.8px;width:2px;height:39.4px;background:linear-gradient(to right,#cdcdcd 0,#cdcdcd 50%,#fdfdfd 50%)"></div>
<!-- selected row -->
<div class="abs" style="left:274px;top:383.6px;width:891.8px;height:35.8px;background:#fdeea2"></div>
<div class="abs" style="left:274px;top:383.6px;width:31.8px;height:35.8px;background:#fad822"></div>
<div class="abs" style="left:305.6px;top:383.6px;width:2px;height:35.8px;background:#fffdf2"></div>
<div class="abs" style="left:551px;top:383.6px;width:2px;height:35.8px;background:#fffdf2"></div>
<div class="abs" style="left:765.4px;top:383.6px;width:2px;height:35.8px;background:#fffdf2"></div>
<!-- row separators -->
<svg style="left:0;top:0" width="1200" height="797" viewBox="0 0 1200 797"><path d="M274 421.1 H1166" stroke="#e2e2e2" stroke-width="1.5"/><path d="M274 460.1 H1166" stroke="#e2e2e2" stroke-width="1.5"/><path d="M274 499.1 H1166" stroke="#e2e2e2" stroke-width="1.5"/><path d="M274 538.4 H1166" stroke="#e2e2e2" stroke-width="1.5"/><path d="M274 577.5 H1166" stroke="#e2e2e2" stroke-width="1.5"/></svg>
<!-- header text -->
<div class="t th" style="left:328.8px;top:350.5px">Тип цен</div>
<div class="t th" style="left:574.4px;top:350.5px">Валюта</div>
<div class="t th" style="left:683.5px;top:350.5px">Цена</div>
<div class="t th" style="left:784.3px;top:350.5px">Документ</div>
<!-- rows -->
<div class="t" style="left:329px;top:393.4px;letter-spacing:.25px">Закупочные</div>
<div class="t" style="left:574.6px;top:393.4px">руб.</div>
<div class="t doc" style="left:784.5px;top:393.4px">Установка цен номенклатуры 00-000002 от 01.03.2018</div>
<div class="t" style="left:329px;top:432.5px">Оптовые</div>
<div class="t" style="left:574.6px;top:432.5px">руб.</div>
<div class="t num" style="top:432.5px">380,00</div>
<div class="t doc" style="left:784.5px;top:432.5px">Установка цен номенклатуры 00-000002 от 01.03.2018</div>
<div class="t" style="left:329px;top:471.5px;letter-spacing:.2px">Основная цена продажи</div>
<div class="t" style="left:574.6px;top:471.5px">руб.</div>
<div class="t num" style="top:471.5px">430,00</div>
<div class="t doc" style="left:784.5px;top:471.5px">Установка цен номенклатуры 00-000003 от 01.03.2018</div>
<div class="t" style="left:329px;top:510.5px">Плановые</div>
<div class="t" style="left:574.6px;top:510.5px">руб.</div>
<div class="t" style="left:329px;top:549.9px">Розничные</div>
<div class="t" style="left:574.6px;top:549.9px">руб.</div>
<div class="t num" style="top:549.9px">400,00</div>
<div class="t doc" style="left:784.5px;top:549.9px">Установка цен номенклатуры 00-000001 от 13.03.2018</div>
<!-- red annotation boxes -->
<div class="abs" style="left:320px;top:292.6px;width:183px;height:48.4px;border:4px solid #ec111d"></div>
<div class="abs" style="left:659.2px;top:339.8px;width:105px;height:238.4px;border:4px solid #ec111d"></div>
<!--/MAIN-->
<!--FRAMEEDGES-->
<!-- left frame -->
<div class="abs" style="left:0;top:47px;width:7px;height:750px;background:linear-gradient(to right,#7f7f7f 0,#7f7f7f 1.1px,#d2d2d3 1.5px,#d0d0d1 3px,#bcbdc0 3.5px,#b8b9bc 5px,#aeafb6 5.4px,#aeafb6 7px)"></div>
<div class="abs" style="left:1.2px;top:28px;width:2px;height:19px;background:#cfcfd1;opacity:.8"></div>
<!-- right frame -->
<div class="abs" style="left:1193px;top:47px;width:7px;height:750px;background:linear-gradient(to right,#aeafb6 0,#aeafb6 1.4px,#b8b9bc 1.8px,#bcbdc0 3.6px,#d0d0d1 4.2px,#d2d2d3 5.6px,#7f7f7f 6px,#7f7f7f 7px)"></div>
<div class="abs" style="left:1196.8px;top:28px;width:2px;height:19px;background:#cfcfd1;opacity:.8"></div>
<!-- bottom frame -->
<div class="abs" style="left:0;top:790px;width:1200px;height:7px;background:linear-gradient(to bottom,#a3a5b1 0,#a3a5b1 1.3px,#b9babd 1.7px,#bcbdc0 4px,#d4d4d4 4.4px,#d4d4d4 5.4px,#7f7f7f 5.8px,#7f7f7f 7px)"></div>
<div class="abs" style="left:0;top:790px;width:1.1px;height:7px;background:#7f7f7f"></div>
<div class="abs" style="left:1198.9px;top:790px;width:1.1px;height:7px;background:#7f7f7f"></div>
<!-- top edge + corners -->
<div class="abs" style="left:0;top:0;width:1200px;height:1px;background:#6e6e6e"></div>
<div class="abs" style="left:0;top:0;width:1.1px;height:47px;background:#7f7f7f"></div>
<div class="abs" style="left:1198.9px;top:0;width:1.1px;height:47px;background:#7f7f7f"></div>
<svg style="left:0;top:0" width="9" height="9" viewBox="0 0 9 9"><path d="M0 0 H6.4 Q1.4 1.4 0 6.4 Z" fill="#b9d9f9"/><path d="M6.4 .5 Q1.7 1.7 .5 6.4" fill="none" stroke="#777" stroke-width="1.1"/></svg>
<svg style="left:1191px;top:0" width="9" height="9" viewBox="0 0 9 9"><path d="M9 0 H2.6 Q7.6 1.4 9 6.4 Z" fill="#b9d9f9"/><path d="M2.6 .5 Q7.3 1.7 8.5 6.4" fill="none" stroke="#777" stroke-width="1.1"/></svg>
<!--/FRAMEEDGES-->
</div>
</body>
</html>
